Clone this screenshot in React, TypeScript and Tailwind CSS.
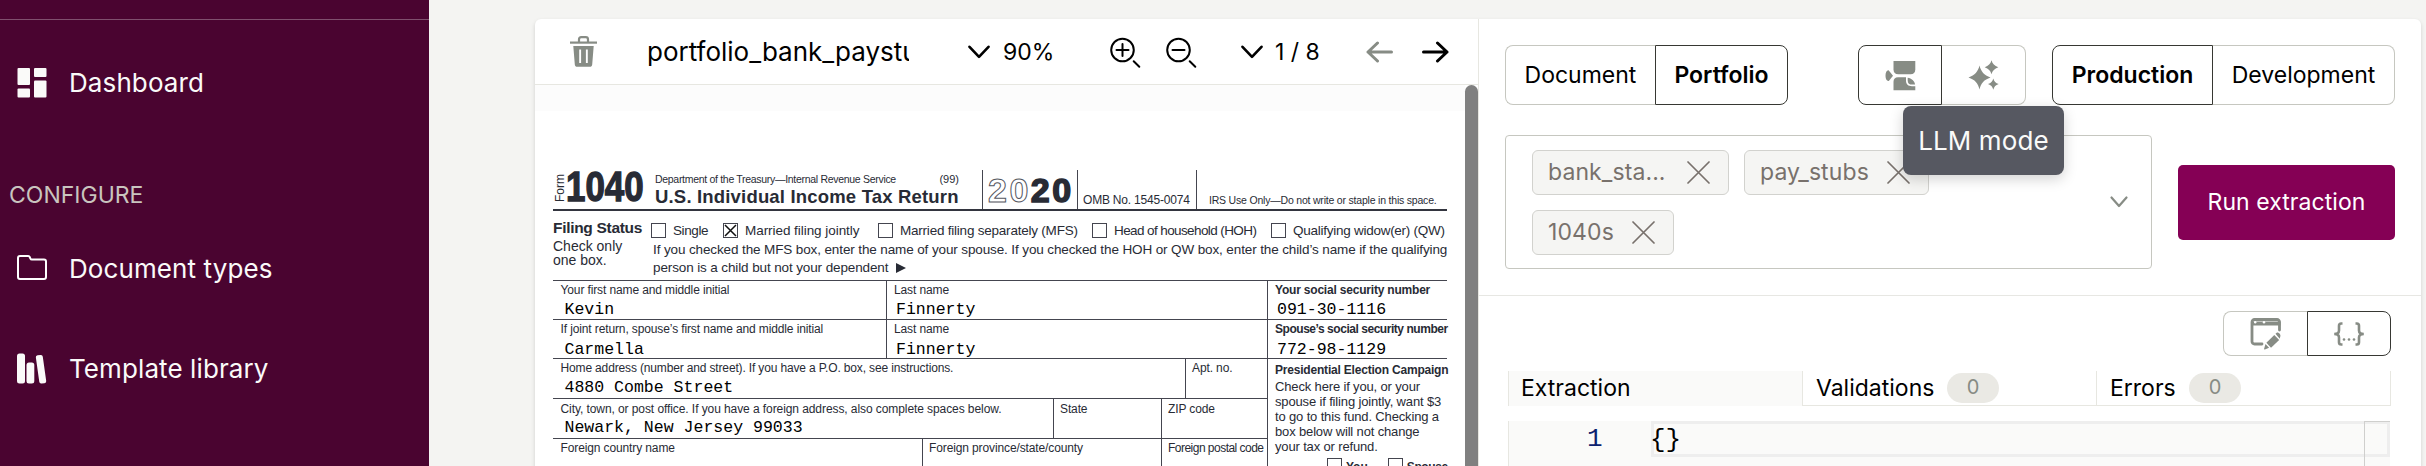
import React from 'react';

type Kids = { children?: React.ReactNode };

/* ---------- Icons ---------- */

const DashboardIcon = () => (
  <svg className="block h-8 w-8" viewBox="0 0 32 32" fill="#fafaf9">
    <rect x="1.5" y="1" width="12.5" height="17" rx="1" />
    <rect x="1.5" y="21.5" width="12.5" height="9" rx="1" />
    <rect x="18" y="1" width="12.5" height="9" rx="1" />
    <rect x="18" y="13.5" width="12.5" height="17" rx="1" />
  </svg>
);

const FolderIcon = () => (
  <svg className="block h-8 w-8" viewBox="0 0 32 32" fill="none" stroke="#fff" strokeWidth="2" strokeLinejoin="round">
    <path d="M2 5a2 2 0 0 1 2-2h8.2c.8 0 1.300.4 1.500 1l.6 1.400c.3.800.9 1.200 1.700 1.200H28a2 2 0 0 1 2 2V24a2 2 0 0 1-2 2H4a2 2 0 0 1-2-2z" />
  </svg>
);

const LibraryIcon = () => (
  <svg className="block h-8 w-8" viewBox="0 0 32 32" fill="#fafaf9">
    <rect x="1" y="0.500" width="8" height="30" rx="2.500" />
    <rect x="10.500" y="9.500" width="7.800" height="21" rx="2.500" />
    <rect x="21.500" y="2" width="7" height="28.500" rx="2" transform="rotate(-8 25 16)" />
  </svg>
);

const TrashIcon = () => (
  <svg className="block h-[31px] w-[27px]" viewBox="0 0 27 31" fill="none">
    <path d="M9 6V3.500C9 2 9.800 1.200 11.200 1.200h4.600C17.200 1.200 18 2 18 3.500V6" stroke="#878c85" strokeWidth="2.200" />
    <path d="M0 5.500h27v2.200H0z" fill="#878c85" />
    <path
      fillRule="evenodd"
      fill="#878c85"
      d="M3.300 10h20.400l-1.500 18.500c-.1 1.500-1 2.300-2.500 2.300H7.300c-1.500 0-2.400-.8-2.500-2.300zM9.200 13.500v13.500h1.900V13.500zM15.900 13.500v13.500h1.900V13.500z"
    />
  </svg>
);

const ChevronDown = () => (
  <svg className="block h-[14px] w-[22px]" viewBox="0 0 22 14" fill="none" stroke="#000" strokeWidth="2.600" strokeLinecap="round" strokeLinejoin="round">
    <path d="M1.500 1.800 11 11.800l9.500-10" />
  </svg>
);

const ZoomIcon = ({ plus }: { plus?: boolean }) => (
  <svg className="block h-8 w-8" viewBox="0 0 32 32" fill="none" stroke="#000" strokeWidth="2" strokeLinecap="round">
    <circle cx="12.500" cy="13" r="11.300" />
    <path d="M6.500 13h12" />
    {plus && <path d="M12.500 7v12" />}
    <path d="M23.700 24.200l5.600 5.600" />
  </svg>
);

const ArrowIcon = ({ left }: { left?: boolean }) => (
  <svg className="block h-[22px] w-[27px]" viewBox="0 0 27 22" fill="none" strokeWidth="3" strokeLinecap="round" strokeLinejoin="round" stroke={left ? '#878c85' : '#000'}>
    {left ? <path d="M25.500 11H2M11.500 2 2 11l9.500 9" /> : <path d="M1.500 11H25M15.500 2 25 11l-9.500 9" />}
  </svg>
);

const CloseIcon = () => (
  <svg className="block h-[23px] w-[23px] shrink-0" viewBox="0 0 23 23" fill="none" stroke="#78716c" strokeWidth="1.700" strokeLinecap="round">
    <path d="M1 1l21 21M22 1 1 22" />
  </svg>
);

const LlmIcon = () => (
  <svg className="block h-[31px] w-[31px]" viewBox="0 0 31 31" fill="#878c85">
    <path d="M8.500 1h21.800v8.500c0 3-1.800 4.700-4.700 4.700H13.200c-3 0-4.700-1.700-4.700-4.700z" />
    <path d="M3.800 10.400 8 15.700l-4.200 5.200C1.800 21.400.5 18.900.5 15.700s1.300-5.800 3.300-5.300z" />
    <path d="M13 17.300h8v3.200c0 4 2.200 5.700 6 5.700h3.300v4H8.500v-8.500c0-2.600 1.700-4.400 4.500-4.400z" />
    <path d="M22.700 17.800c3.800.6 6.800 3.200 7.400 6.800h-2.800c-3 0-4.600-1.200-4.600-4.200z" />
  </svg>
);

const SparkleIcon = () => (
  <svg className="block h-[30px] w-[31px]" viewBox="0 0 31 30" fill="#878c85">
    <path d="M11.500 5.500c1.500 6 4.500 9.800 11 12-6.500 2.200-9.500 5.500-11 12C10 23 7 19.700.5 17.500 7 15.300 10 11.500 11.500 5.500z" />
    <path d="M23.500.3c1 3.600 3 5.600 6.800 6.900-3.800 1.300-5.800 3.400-6.800 7-1-3.600-3-5.700-6.800-7 3.800-1.300 5.800-3.300 6.800-6.900z" />
    <path d="M25.300 18.500c.8 2.900 2.300 4.500 5.400 5.500-3.100 1-4.600 2.700-5.400 5.700-.8-3-2.300-4.700-5.300-5.700 3-1 4.500-2.600 5.300-5.500z" />
  </svg>
);

const FormEditIcon = () => (
  <svg className="block h-[32px] w-[32px]" viewBox="0 0 32 32">
    <path d="M29.500 12V4a2.500 2.500 0 0 0-2.500-2.500H4.500A2.500 2.500 0 0 0 2 4v19.500A2.500 2.500 0 0 0 4.500 26H12" fill="none" stroke="#878c85" strokeWidth="2.800" strokeLinecap="round" />
    <path d="M1 3.500h29.500v4H1z" fill="#878c85" />
    <circle cx="5.200" cy="4.300" r="1.200" fill="#fff" />
    <circle cx="14" cy="4.300" r="1.200" fill="#fff" />
    <path d="M24.300 17l4.900 4.900-8.200 7.800-4.600-4.900z" fill="#878c85" />
    <path d="M25.500 15.800l1.200-1c1.500-1 4.500 1.800 3.600 3.600l-.6 2.300z" fill="#878c85" />
    <path d="M15.500 26l3.600 3.800-4.200 1.700c-.7.200-1-.2-.8-.8z" fill="#878c85" />
  </svg>
);

const BracesIcon = () => (
  <svg className="block h-[26px] w-[32px]" viewBox="0 0 32 26" fill="none" stroke="#878c85" strokeWidth="2.600">
    <path d="M9.500 2.500H8.200C6.600 2.500 6 3.300 6 4.800v4.700C6 11.800 4.500 13 1.200 13 4.500 13 6 14.200 6 16.500v4.700c0 1.500.6 2.300 2.200 2.300h1.300" />
    <path d="M22.500 2.500h1.300c1.600 0 2.200.8 2.200 2.300v4.700c0 2.300 1.500 3.500 4.800 3.500-3.300 0-4.800 1.200-4.800 3.500v4.700c0 1.500-.6 2.300-2.200 2.300h-1.300" />
    <g fill="#878c85" stroke="none">
      <circle cx="11" cy="18.500" r="1.300" />
      <circle cx="16" cy="18.500" r="1.300" />
      <circle cx="21" cy="18.500" r="1.300" />
    </g>
  </svg>
);

/* ---------- Sidebar ---------- */

const NavItem = ({ icon, label, className }: { icon: React.ReactNode; label: string; className: string }) => (
  <div className={'flex h-8 items-center gap-[21px] pl-4 text-[26px] tracking-[0.100px] text-[#fafaf9] ' + className}>
    {icon}
    <span className="leading-8">{label}</span>
  </div>
);

const Sidebar = () => (
  <aside className="w-[429px] shrink-0 bg-[#4a0430]">
    <div className="h-[20px] border-b border-[#80506e]" />
    <NavItem icon={<DashboardIcon />} label="Dashboard" className="mt-[47px]" />
    <div className="mt-[80px] h-8 pl-[9px] text-[23px] leading-8 text-[#c9c5bf]">CONFIGURE</div>
    <NavItem icon={<FolderIcon />} label="Document types" className="mt-[42px]" />
    <NavItem icon={<LibraryIcon />} label="Template library" className="mt-[68px]" />
  </aside>
);

/* ---------- Tax form ---------- */

const Label = ({ children, className = 'tracking-[-0.120px]' }: Kids & { className?: string }) => (
  <p className={'text-[12px] leading-[14px] ' + className}>{children}</p>
);

const Value = ({ children, className = 'pl-[4px]' }: Kids & { className?: string }) => (
  <p className={"font-['Liberation_Mono',monospace] text-[16.550px] leading-[18px] text-black " + className}>{children}</p>
);

const Box = ({ checked }: { checked?: boolean }) => (
  <span className="flex h-[15px] w-[15px] shrink-0 items-center justify-center border border-[#44454f]">
    {checked && (
      <svg className="h-[13px] w-[13px]" viewBox="0 0 13 13" stroke="#111" strokeWidth="1.500">
        <path d="M1 1l11 11M12 1 1 12" />
      </svg>
    )}
  </span>
);

const Option = ({ label, checked, className, text }: { label: string; checked?: boolean; className: string; text: string }) => (
  <div className={'flex shrink-0 items-center gap-[7px] ' + className}>
    <Box checked={checked} />
    <span className={text}>{label}</span>
  </div>
);

const TaxForm = () => (
  <div className="ml-[18px] flex w-[894px] flex-col whitespace-nowrap font-['Liberation_Sans',Arial,sans-serif] text-[#282b35]">
    <div className="flex h-[41px] shrink-0 border-b-2 border-[#33353f]">
      <div className="flex w-[102px] shrink-0">
        <span className="h-[34px] w-[13px] rotate-180 pt-[2px] text-[12px] leading-[14px] [writing-mode:vertical-rl]">Form</span>
        <span className="origin-left scale-x-[0.830] text-[42px] font-bold leading-[33px] [-webkit-text-stroke:1.400px_#282b35]">1040</span>
      </div>
      <div className="flex w-[327px] shrink-0 flex-col pt-[3px]">
        <div className="flex w-[304px] justify-between text-[10.500px] leading-[13px]">
          <span className="tracking-[-0.300px]">Department of the Treasury—Internal Revenue Service</span>
          <span className="text-[11px]">(99)</span>
        </div>
        <span className="mt-px text-[18.500px] font-bold leading-[20px] tracking-[0.180px]">U.S. Individual Income Tax Return</span>
      </div>
      <div className="flex w-[96px] shrink-0 border-x border-[#44454f] pl-[5px] pt-[4px] text-[34px] font-bold leading-[32px] tracking-[2.500px]">
        <span className="text-white [-webkit-text-stroke:1px_#55575f]">20</span>
        <span className="[-webkit-text-stroke:1.500px_#282b35]">20</span>
      </div>
      <div className="flex w-[119px] shrink-0 items-end border-r border-[#44454f] pb-[2px] pl-[5px] text-[12px] leading-[14px] tracking-[-0.200px]">OMB No. 1545-0074</div>
      <div className="flex items-end pb-[2px] pl-[12px] text-[10.500px] leading-[14px] tracking-[-0.200px]">IRS Use Only—Do not write or staple in this space.</div>
    </div>

    <div className="flex h-[69px] shrink-0 pt-[8px]">
      <div className="w-[98px] shrink-0">
        <p className="text-[15.500px] font-bold leading-[18px] tracking-[-0.300px]">Filing Status</p>
        <p className="pt-[2px] text-[14px] leading-[14px]">Check only</p>
        <p className="text-[14px] leading-[14px]">one box.</p>
      </div>
      <div className="text-[13.500px] tracking-[-0.120px]">
        <div className="flex h-[23px] items-center leading-4">
          <Option label="Single" className="w-[72px]" text="tracking-[-0.400px]" />
          <Option label="Married filing jointly" checked className="w-[155px]" text="tracking-[-0.050px]" />
          <Option label="Married filing separately (MFS)" className="w-[214px]" text="tracking-[-0.220px]" />
          <Option label="Head of household (HOH)" className="w-[179px]" text="tracking-[-0.600px]" />
          <Option label="Qualifying widow(er) (QW)" className="" text="tracking-[-0.260px]" />
        </div>
        <p className="-mt-px pl-[2px] leading-[18px]">
          If you checked the MFS box, enter the name of your spouse. If you checked the HOH or QW box, enter the child’s name if the qualifying
        </p>
        <p className="flex items-center gap-2 pl-[2px] leading-[18px]">
          person is a child but not your dependent
          <svg className="h-[10px] w-[10px]" viewBox="0 0 10 10" fill="#282b35">
            <path d="M0 0l10 5-10 5z" />
          </svg>
        </p>
      </div>
    </div>

    <div className="flex">
      <div className="w-[715px] shrink-0 border-r border-[#44454f]">
        <div className="flex h-[39px] border-t border-[#44454f]">
          <div className="w-[334px] border-r border-[#44454f] pl-[7.500px] pt-[2px]">
            <Label>Your first name and middle initial</Label>
            <Value className="mt-[4px] pl-[4px]">Kevin</Value>
          </div>
          <div className="pl-[7px] pt-[2px]">
            <Label>Last name</Label>
            <Value className="mt-[4px] pl-[2px]">Finnerty</Value>
          </div>
        </div>
        <div className="flex h-[39px] border-t border-[#44454f]">
          <div className="w-[334px] border-r border-[#44454f] pl-[7.500px] pt-[2px]">
            <Label>If joint return, spouse’s first name and middle initial</Label>
            <Value className="mt-[5px] pl-[4px]">Carmella</Value>
          </div>
          <div className="pl-[7px] pt-[2px]">
            <Label>Last name</Label>
            <Value className="mt-[5px] pl-[2px]">Finnerty</Value>
          </div>
        </div>
        <div className="flex h-[40px] border-t border-[#44454f]">
          <div className="w-[632px] pl-[7.500px] pt-[2px]">
            <Label className="tracking-[-0.150px]">Home address (number and street). If you have a P.O. box, see instructions.</Label>
            <Value className="mt-[4px] pl-[4px]">4880 Combe Street</Value>
          </div>
          <div className="border-l border-[#44454f] pl-[6px] pt-[2px]">
            <Label>Apt. no.</Label>
          </div>
        </div>
        <div className="flex h-[40px] border-t border-[#44454f]">
          <div className="w-[500px] pl-[7.500px] pt-[3px]">
            <Label className="tracking-[-0.080px]">City, town, or post office. If you have a foreign address, also complete spaces below.</Label>
            <Value className="mt-[3px] pl-[4px]">Newark, New Jersey 99033</Value>
          </div>
          <div className="w-[108px] border-l border-[#44454f] pl-[6px] pt-[3px]">
            <Label>State</Label>
          </div>
          <div className="border-l border-[#44454f] pl-[6px] pt-[3px]">
            <Label>ZIP code</Label>
          </div>
        </div>
        <div className="flex h-[40px] border-t border-[#44454f]">
          <div className="w-[369px] pl-[7.500px] pt-[2px]">
            <Label>Foreign country name</Label>
          </div>
          <div className="w-[239px] border-l border-[#44454f] pl-[6px] pt-[2px]">
            <Label>Foreign province/state/county</Label>
          </div>
          <div className="border-l border-[#44454f] pl-[6px] pt-[2px]">
            <Label className="tracking-[-0.520px]">Foreign postal code</Label>
          </div>
        </div>
      </div>
      <div className="w-[179px] shrink-0">
        <div className="h-[39px] border-t border-[#44454f] pl-[7px] pt-[2px]">
          <Label className="font-bold tracking-[-0.200px]">Your social security number</Label>
          <Value className="mt-[4px] pl-[2px]">091-30-1116</Value>
        </div>
        <div className="h-[39px] border-t border-[#44454f] pl-[7px] pt-[2px]">
          <Label className="font-bold tracking-[-0.460px]">Spouse’s social security number</Label>
          <Value className="mt-[5px] pl-[2px]">772-98-1129</Value>
        </div>
        <div className="border-t border-[#44454f] pl-[7px] pt-[4px]">
          <Label className="font-bold tracking-[-0.200px]">Presidential Election Campaign</Label>
          <p className="pt-[2px] text-[13px] leading-[15px] tracking-[-0.150px]">
            Check here if you, or your
            <br />
            spouse if filing jointly, want $3
            <br />
            to go to this fund. Checking a
            <br />
            box below will not change
            <br />
            your tax or refund.
          </p>
          <div className="mt-[4px] flex gap-[20px] pl-[52px] text-[12px] font-bold">
            <span className="flex gap-1"><Box />You</span>
            <span className="flex gap-1 tracking-[-0.400px]"><Box />Spouse</span>
          </div>
        </div>
      </div>
    </div>
  </div>
);

const Viewer = () => (
  <section className="flex w-[944px] shrink-0 flex-col border-r border-[#e7e7e1]">
    <div className="flex h-[66px] shrink-0 items-center border-b border-[#e7e7e1] pl-[35px] text-[23px]">
      <TrashIcon />
      <div className="ml-[50px] w-[262px] overflow-hidden whitespace-nowrap text-[26px] leading-8">portfolio_bank_paystubs</div>
      <div className="ml-[59px] flex w-[142px] items-center gap-[13px] whitespace-nowrap leading-8">
        <ChevronDown />
        90%
      </div>
      <div className="mt-[2px] flex gap-6">
        <ZoomIcon plus />
        <ZoomIcon />
      </div>
      <div className="ml-[43px] flex w-[125px] items-center gap-[12px] whitespace-nowrap leading-8">
        <ChevronDown />
        <span>1 / 8</span>
      </div>
      <div className="flex gap-[29px]">
        <ArrowIcon left />
        <ArrowIcon />
      </div>
    </div>
    <div className="flex min-h-0 grow overflow-hidden">
      <div className="w-[930px] shrink-0">
        <div className="mb-[59px] h-[26px] bg-[#fcfcfc]" />
        <TaxForm />
      </div>
      <div className="w-[13px] rounded-t-full bg-[#808080]" />
    </div>
  </section>
);

/* ---------- Extraction panel ---------- */

const Chip = ({ label, className }: { label: string; className: string }) => (
  <div className={'flex h-[45px] items-center justify-between rounded-md border border-[#d2d2ce] bg-[#f5f5f3] pl-[15px] pr-[18px] text-[23px] leading-8 tracking-[0.100px] text-[#78716c] ' + className}>
    {label}
    <CloseIcon />
  </div>
);

const Badge = ({ children }: Kids) => (
  <span className="flex h-[30px] w-[52px] items-center justify-center rounded-full bg-[#eae9e4] pb-[2px] text-[20px] text-[#878c85]">{children}</span>
);

const Controls = () => (
  <div className="flex h-[60px] shrink-0 whitespace-nowrap text-[23px] [&>div]:flex [&>div]:items-center [&>div]:justify-center">
    <div className="w-[150px] rounded-l-lg border border-r-0 border-[#c6c7c0]">Document</div>
    <div className="w-[133px] rounded-r-lg border border-[#373833] font-semibold">Portfolio</div>
    <div className="relative ml-[70px] w-[84px] rounded-l-lg border border-[#373833]">
      <LlmIcon />
      <div className="absolute left-[44px] top-[60px] z-10 flex h-[69px] w-[161px] items-center justify-center rounded-lg bg-[#565861] text-[26px] tracking-[0.100px] text-[#fafaf9] shadow-[0_4px_14px_rgba(0,0,0,0.180)]">
        LLM mode
      </div>
    </div>
    <div className="w-[84px] rounded-r-lg border border-l-0 border-[#c6c7c0]">
      <SparkleIcon />
    </div>
    <div className="ml-[26px] w-[161px] rounded-l-lg border border-[#373833] font-semibold">Production</div>
    <div className="w-[182px] rounded-r-lg border border-l-0 border-[#c6c7c0]">Development</div>
  </div>
);

const Panel = () => (
  <section className="flex w-[942px] shrink-0 flex-col">
    <div className="h-[277px] shrink-0 border-b border-[#e7e7e3] pl-[26px] pt-[26px]">
      <Controls />
      <div className="mt-[30px] flex items-center gap-[26px]">
        <div className="flex h-[134px] w-[647px] items-center rounded border border-[#c6c7c0] pl-[26px] pr-[23px]">
          <div className="flex w-[480px] flex-wrap gap-[15px]">
            <Chip label="bank_sta..." className="w-[197px]" />
            <Chip label="pay_stubs" className="w-[185px]" />
            <Chip label="1040s" className="w-[142px]" />
          </div>
          <svg className="ml-auto h-[12px] w-[18px]" viewBox="0 0 18 12" fill="none" stroke="#878c85" strokeWidth="2.200" strokeLinecap="round" strokeLinejoin="round">
            <path d="M1.500 1.500 9 10l7.500-8.500" />
          </svg>
        </div>
        <div className="flex h-[75px] w-[217px] items-center justify-center rounded-[5px] bg-[#850055] text-[23px] tracking-[0.060px] text-white">Run extraction</div>
      </div>
    </div>

    <div className="mr-[30px] mt-[15px] flex h-[45px] w-[168px] shrink-0 self-end">
      <div className="flex w-[84px] items-center justify-center rounded-l-lg border border-r-0 border-[#c6c7c0]">
        <FormEditIcon />
      </div>
      <div className="flex w-[84px] items-center justify-center rounded-r-lg border border-[#373833]">
        <BracesIcon />
      </div>
    </div>

    <div className="ml-[29px] mt-[15px] flex h-[35px] w-[883px] shrink-0 border-x border-[#e7e7e1] text-[23px]">
      <div className="flex w-[293px] items-center bg-[#fafaf9] pl-[12px]">Extraction</div>
      <div className="flex w-[294px] items-center gap-[13px] border-b border-l border-[#e7e7e1] pl-[13px]">
        <span className="w-[118px]">Validations</span>
        <Badge>0</Badge>
      </div>
      <div className="flex w-[294px] items-center gap-[13px] border-b border-l border-[#e7e7e1] pl-[13px]">
        <span className="w-[66px]">Errors</span>
        <Badge>0</Badge>
      </div>
    </div>

    <div className="ml-[29px] mr-[31px] mt-[15px] flex grow border-l border-[#e7e7e1] bg-[#fafaf9] font-['Liberation_Mono',monospace] text-[26px]">
      <div className="w-[142px] shrink-0 pl-[78px] leading-[36px] text-[#0b216f]">1</div>
      <div className="h-[36px] grow border-[3px] border-[#eeeeee] leading-[33px] text-black">
        <span className="-ml-[4px]">{'{}'}</span>
      </div>
      <div className="-ml-[26px] w-[26px] border-l border-t border-[#cfcfcd]" />
    </div>
  </section>
);

export default function App() {
  return (
    <div className="flex h-[466px] w-[2426px] overflow-hidden bg-[#f4f4f2] font-['Inter',sans-serif] text-black">
      <Sidebar />
      <main className="ml-[106px] mt-[19px] flex h-[480px] w-[1886px] shrink-0 rounded-t-md bg-white shadow-[0_2px_4px_rgba(0,0,0,0.150)]">
        <Viewer />
        <Panel />
      </main>
    </div>
  );
}
